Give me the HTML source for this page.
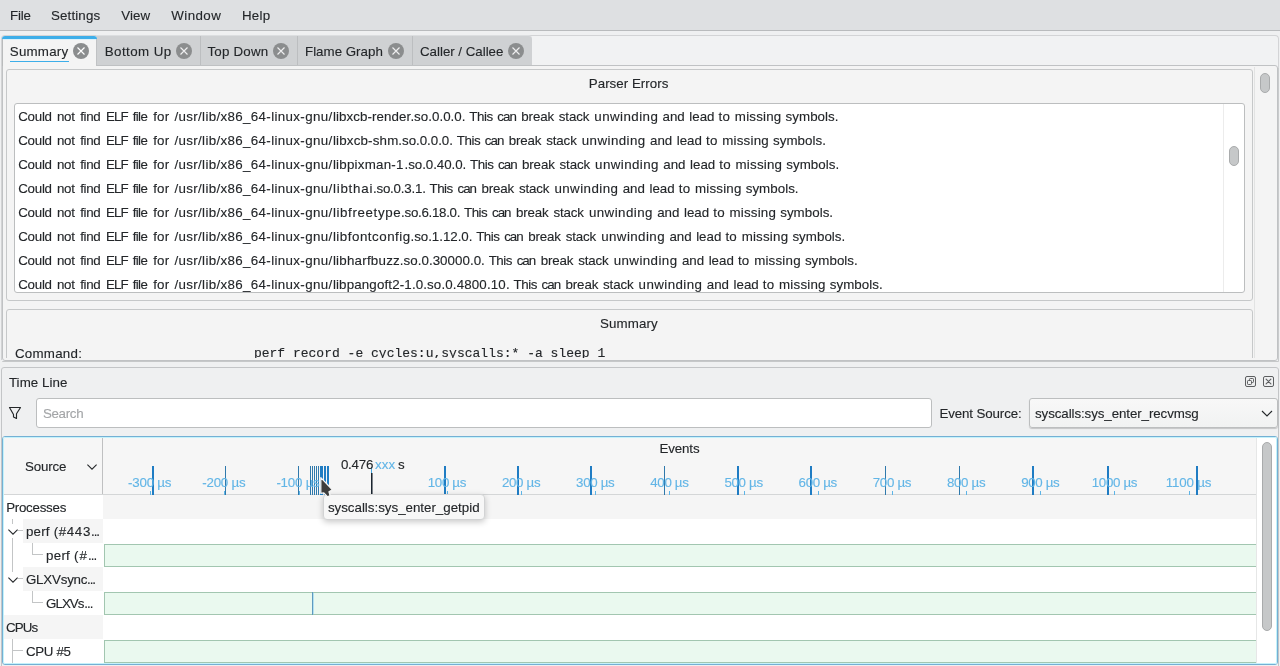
<!DOCTYPE html>
<html><head><meta charset="utf-8"><title>hotspot</title>
<style>
html,body{margin:0;padding:0}
body{width:1280px;height:666px;overflow:hidden;background:#eff0f1;position:relative;font-family:"Liberation Sans",sans-serif;font-size:13.33px;color:#232629}
div,span,svg{position:absolute;box-sizing:border-box}
.t{white-space:pre;line-height:18px;height:18px;-webkit-text-stroke:0.12px currentColor}
#menubar{left:0;top:0;width:1280px;height:30px;background:#dee0e2}
#menuline{left:0;top:30px;width:1280px;height:1px;background:#b9bbbd}
#tabs-inactive{left:96px;top:35px;width:436px;height:31px;background:#cfd1d3;border-top-right-radius:4px;border-bottom:1px solid #bfc1c3;border-top:1px solid #dcdee0}
.tsep{top:36px;width:1px;height:29px;background:#bcbec0}
#pane{left:2px;top:65px;width:1276px;height:296px;background:#f4f4f4;border:1px solid #c0c2c4;border-radius:0 3px 3px 3px}
#tab-active{left:2px;top:36px;width:95px;height:30px;background:#f4f4f4;border-radius:3px 3px 0 0;overflow:hidden}
#tab-active i{position:absolute;left:0;top:0;width:95px;height:3px;background:#3daee9}
#tab-active b{position:absolute;left:0;top:3px;width:1px;height:27px;background:#b9bbbc}
#tab-active u{position:absolute;left:94px;top:3px;width:1px;height:27px;background:#c0c2c4}
#tab-active s{position:absolute;left:1px;top:3px;width:93px;height:1px;background:#d9f1fb}
#tab-ul{left:10px;top:61px;width:59px;height:1px;background:#3daee9}
.cb{width:16px;height:16px;top:43px}
.gb{border:1px solid #c6c8c9;border-radius:3px;background:#f4f4f4}
.lb{background:#fff;border:1px solid #bcbebf;border-radius:3px}
.sbh{width:10px;border-radius:5px;background:#c6c8c9;border:1px solid #a9abac}
#paneshadow{left:2px;top:361px;width:1277px;height:1px;background:#c6c8c9;border-radius:0 0 3px 3px}
#paneshadow2{left:1278px;top:68px;width:1px;height:293px;background:#c9cbcc}
#dock{left:1px;top:367px;width:1278px;height:310px;border:1px solid #c3c5c7;border-radius:3px;background:#eff0f1}
#tree{left:2px;top:436px;width:1276px;height:229px;border:1px solid #74b0d4;border-radius:3px;background:#fff;overflow:hidden}
#treeglow{left:3px;top:437px;width:1274px;height:227px;border:1px solid #c4f2fb;border-radius:2px;z-index:5}
.row{left:0;height:24px}
.bar{left:101px;width:1152px;height:23px;background:#eaf9ef;border:1px solid #a2c6b0;border-right:0}
.br{background:#c3c5c6}
.ev{top:466px;height:29px;background:#1f7cc3}
.ev1{top:466px;height:29px;width:1px;background:#2f79ac}
.tick{top:491px;width:1px;height:4px;background:#5db4e6}
</style></head><body>
<div id="root" style="left:0;top:0;width:1280px;height:666px;will-change:transform">
<div id="menubar"></div><div id="menuline"></div>

<div style="left:1px;top:35px;width:1278px;height:34px;border:1px solid #d3d4d6;border-bottom:0;border-radius:4px 4px 0 0;background:#f1f2f3"></div>
<div id="pane"></div>
<div id="tabs-inactive"></div>
<div class="tsep" style="left:200px"></div><div class="tsep" style="left:297px"></div><div class="tsep" style="left:412px"></div>
<div id="tab-active"><i></i><b></b><u></u><s></s></div>
<div id="tab-ul"></div>
<svg class="cb" style="left:73px" viewBox="0 0 16 16"><circle cx="8" cy="8" r="8" fill="#8b8d8e"/><path d="M4.5 4.5l7 7M11.5 4.5l-7 7" stroke="#fff" stroke-width="1.15" fill="none"/></svg>
<svg class="cb" style="left:176px" viewBox="0 0 16 16"><circle cx="8" cy="8" r="8" fill="#8b8d8e"/><path d="M4.5 4.5l7 7M11.5 4.5l-7 7" stroke="#eeeeef" stroke-width="1.15" fill="none"/></svg>
<svg class="cb" style="left:273px" viewBox="0 0 16 16"><circle cx="8" cy="8" r="8" fill="#8b8d8e"/><path d="M4.5 4.5l7 7M11.5 4.5l-7 7" stroke="#eeeeef" stroke-width="1.15" fill="none"/></svg>
<svg class="cb" style="left:388px" viewBox="0 0 16 16"><circle cx="8" cy="8" r="8" fill="#8b8d8e"/><path d="M4.5 4.5l7 7M11.5 4.5l-7 7" stroke="#eeeeef" stroke-width="1.15" fill="none"/></svg>
<svg class="cb" style="left:508px" viewBox="0 0 16 16"><circle cx="8" cy="8" r="8" fill="#8b8d8e"/><path d="M4.5 4.5l7 7M11.5 4.5l-7 7" stroke="#eeeeef" stroke-width="1.15" fill="none"/></svg>

<!-- Parser errors group -->
<div class="gb" style="left:6px;top:69px;width:1247px;height:232px"></div>
<div class="lb" style="left:14px;top:103px;width:1231px;height:190px"></div>
<div style="left:1223px;top:104px;width:1px;height:188px;background:#ececec"></div>
<div class="sbh" style="left:1229px;top:146px;height:20px"></div>
<div style="left:0;top:0;width:1223px;height:292px;overflow:hidden"><span class="t" style="left:18.15px;top:108.38px;color:#232629;font-family:'Liberation Sans';font-size:13.33px;letter-spacing:-0.236px">Could</span>
<span class="t" style="left:56.90px;top:108.38px;color:#232629;font-family:'Liberation Sans';font-size:13.33px;letter-spacing:-0.210px">not</span>
<span class="t" style="left:80.15px;top:108.38px;color:#232629;font-family:'Liberation Sans';font-size:13.33px;letter-spacing:-0.338px">find</span>
<span class="t" style="left:105.90px;top:108.38px;color:#232629;font-family:'Liberation Sans';font-size:13.33px;letter-spacing:-0.851px">ELF</span>
<span class="t" style="left:132.65px;top:108.38px;color:#232629;font-family:'Liberation Sans';font-size:13.33px;letter-spacing:-0.599px">file</span>
<span class="t" style="left:153.15px;top:108.38px;color:#232629;font-family:'Liberation Sans';font-size:13.33px;letter-spacing:0.196px">for</span>
<span class="t" style="left:174.40px;top:108.38px;color:#232629;font-family:'Liberation Sans';font-size:13.33px;letter-spacing:0.353px">/usr/lib/x86_64-linux-gnu/</span>
<span class="t" style="left:332.90px;top:108.38px;color:#232629;font-family:'Liberation Sans';font-size:13.33px;letter-spacing:0.085px">libxcb-render</span>
<span class="t" style="left:410.40px;top:108.38px;color:#232629;font-family:'Liberation Sans';font-size:13.33px;letter-spacing:0.031px">.so.0.0.0.</span>
<span class="t" style="left:469.35px;top:108.38px;color:#232629;font-family:'Liberation Sans';font-size:13.33px;letter-spacing:-0.447px">This</span>
<span class="t" style="left:497.35px;top:108.38px;color:#232629;font-family:'Liberation Sans';font-size:13.33px;letter-spacing:-0.950px">can</span>
<span class="t" style="left:521.35px;top:108.38px;color:#232629;font-family:'Liberation Sans';font-size:13.33px;letter-spacing:-0.139px">break</span>
<span class="t" style="left:558.85px;top:108.38px;color:#232629;font-family:'Liberation Sans';font-size:13.33px;letter-spacing:-0.142px">stack</span>
<span class="t" style="left:594.35px;top:108.38px;color:#232629;font-family:'Liberation Sans';font-size:13.33px;letter-spacing:0.430px">unwinding</span>
<span class="t" style="left:662.60px;top:108.38px;color:#232629;font-family:'Liberation Sans';font-size:13.33px;letter-spacing:-0.033px">and</span>
<span class="t" style="left:689.35px;top:108.38px;color:#232629;font-family:'Liberation Sans';font-size:13.33px;letter-spacing:-0.013px">lead</span>
<span class="t" style="left:718.60px;top:108.38px;color:#232629;font-family:'Liberation Sans';font-size:13.33px;letter-spacing:0.263px">to</span>
<span class="t" style="left:734.85px;top:108.38px;color:#232629;font-family:'Liberation Sans';font-size:13.33px;letter-spacing:0.209px">missing</span>
<span class="t" style="left:785.60px;top:108.38px;color:#232629;font-family:'Liberation Sans';font-size:13.33px;letter-spacing:0.038px">symbols.</span>
<span class="t" style="left:18.15px;top:132.38px;color:#232629;font-family:'Liberation Sans';font-size:13.33px;letter-spacing:-0.236px">Could</span>
<span class="t" style="left:56.90px;top:132.38px;color:#232629;font-family:'Liberation Sans';font-size:13.33px;letter-spacing:-0.210px">not</span>
<span class="t" style="left:80.15px;top:132.38px;color:#232629;font-family:'Liberation Sans';font-size:13.33px;letter-spacing:-0.338px">find</span>
<span class="t" style="left:105.90px;top:132.38px;color:#232629;font-family:'Liberation Sans';font-size:13.33px;letter-spacing:-0.851px">ELF</span>
<span class="t" style="left:132.65px;top:132.38px;color:#232629;font-family:'Liberation Sans';font-size:13.33px;letter-spacing:-0.599px">file</span>
<span class="t" style="left:153.15px;top:132.38px;color:#232629;font-family:'Liberation Sans';font-size:13.33px;letter-spacing:0.196px">for</span>
<span class="t" style="left:174.40px;top:132.38px;color:#232629;font-family:'Liberation Sans';font-size:13.33px;letter-spacing:0.353px">/usr/lib/x86_64-linux-gnu/</span>
<span class="t" style="left:332.90px;top:132.38px;color:#232629;font-family:'Liberation Sans';font-size:13.33px;letter-spacing:0.190px">libxcb-shm</span>
<span class="t" style="left:398.30px;top:132.38px;color:#232629;font-family:'Liberation Sans';font-size:13.33px;letter-spacing:-0.019px">.so.0.0.0.</span>
<span class="t" style="left:456.75px;top:132.38px;color:#232629;font-family:'Liberation Sans';font-size:13.33px;letter-spacing:-0.447px">This</span>
<span class="t" style="left:484.75px;top:132.38px;color:#232629;font-family:'Liberation Sans';font-size:13.33px;letter-spacing:-0.950px">can</span>
<span class="t" style="left:508.75px;top:132.38px;color:#232629;font-family:'Liberation Sans';font-size:13.33px;letter-spacing:-0.139px">break</span>
<span class="t" style="left:546.25px;top:132.38px;color:#232629;font-family:'Liberation Sans';font-size:13.33px;letter-spacing:-0.142px">stack</span>
<span class="t" style="left:581.75px;top:132.38px;color:#232629;font-family:'Liberation Sans';font-size:13.33px;letter-spacing:0.430px">unwinding</span>
<span class="t" style="left:650.00px;top:132.38px;color:#232629;font-family:'Liberation Sans';font-size:13.33px;letter-spacing:-0.033px">and</span>
<span class="t" style="left:676.75px;top:132.38px;color:#232629;font-family:'Liberation Sans';font-size:13.33px;letter-spacing:-0.013px">lead</span>
<span class="t" style="left:706.00px;top:132.38px;color:#232629;font-family:'Liberation Sans';font-size:13.33px;letter-spacing:0.263px">to</span>
<span class="t" style="left:722.25px;top:132.38px;color:#232629;font-family:'Liberation Sans';font-size:13.33px;letter-spacing:0.209px">missing</span>
<span class="t" style="left:773.00px;top:132.38px;color:#232629;font-family:'Liberation Sans';font-size:13.33px;letter-spacing:0.038px">symbols.</span>
<span class="t" style="left:18.15px;top:156.38px;color:#232629;font-family:'Liberation Sans';font-size:13.33px;letter-spacing:-0.236px">Could</span>
<span class="t" style="left:56.90px;top:156.38px;color:#232629;font-family:'Liberation Sans';font-size:13.33px;letter-spacing:-0.210px">not</span>
<span class="t" style="left:80.15px;top:156.38px;color:#232629;font-family:'Liberation Sans';font-size:13.33px;letter-spacing:-0.338px">find</span>
<span class="t" style="left:105.90px;top:156.38px;color:#232629;font-family:'Liberation Sans';font-size:13.33px;letter-spacing:-0.851px">ELF</span>
<span class="t" style="left:132.65px;top:156.38px;color:#232629;font-family:'Liberation Sans';font-size:13.33px;letter-spacing:-0.599px">file</span>
<span class="t" style="left:153.15px;top:156.38px;color:#232629;font-family:'Liberation Sans';font-size:13.33px;letter-spacing:0.196px">for</span>
<span class="t" style="left:174.40px;top:156.38px;color:#232629;font-family:'Liberation Sans';font-size:13.33px;letter-spacing:0.353px">/usr/lib/x86_64-linux-gnu/</span>
<span class="t" style="left:332.90px;top:156.38px;color:#232629;font-family:'Liberation Sans';font-size:13.33px;letter-spacing:0.240px">libpixman-1</span>
<span class="t" style="left:404.50px;top:156.38px;color:#232629;font-family:'Liberation Sans';font-size:13.33px;letter-spacing:-0.045px">.so.0.40.0.</span>
<span class="t" style="left:470.05px;top:156.38px;color:#232629;font-family:'Liberation Sans';font-size:13.33px;letter-spacing:-0.447px">This</span>
<span class="t" style="left:498.05px;top:156.38px;color:#232629;font-family:'Liberation Sans';font-size:13.33px;letter-spacing:-0.950px">can</span>
<span class="t" style="left:522.05px;top:156.38px;color:#232629;font-family:'Liberation Sans';font-size:13.33px;letter-spacing:-0.139px">break</span>
<span class="t" style="left:559.55px;top:156.38px;color:#232629;font-family:'Liberation Sans';font-size:13.33px;letter-spacing:-0.142px">stack</span>
<span class="t" style="left:595.05px;top:156.38px;color:#232629;font-family:'Liberation Sans';font-size:13.33px;letter-spacing:0.430px">unwinding</span>
<span class="t" style="left:663.30px;top:156.38px;color:#232629;font-family:'Liberation Sans';font-size:13.33px;letter-spacing:-0.033px">and</span>
<span class="t" style="left:690.05px;top:156.38px;color:#232629;font-family:'Liberation Sans';font-size:13.33px;letter-spacing:-0.013px">lead</span>
<span class="t" style="left:719.30px;top:156.38px;color:#232629;font-family:'Liberation Sans';font-size:13.33px;letter-spacing:0.263px">to</span>
<span class="t" style="left:735.55px;top:156.38px;color:#232629;font-family:'Liberation Sans';font-size:13.33px;letter-spacing:0.209px">missing</span>
<span class="t" style="left:786.30px;top:156.38px;color:#232629;font-family:'Liberation Sans';font-size:13.33px;letter-spacing:0.038px">symbols.</span>
<span class="t" style="left:18.15px;top:180.38px;color:#232629;font-family:'Liberation Sans';font-size:13.33px;letter-spacing:-0.236px">Could</span>
<span class="t" style="left:56.90px;top:180.38px;color:#232629;font-family:'Liberation Sans';font-size:13.33px;letter-spacing:-0.210px">not</span>
<span class="t" style="left:80.15px;top:180.38px;color:#232629;font-family:'Liberation Sans';font-size:13.33px;letter-spacing:-0.338px">find</span>
<span class="t" style="left:105.90px;top:180.38px;color:#232629;font-family:'Liberation Sans';font-size:13.33px;letter-spacing:-0.851px">ELF</span>
<span class="t" style="left:132.65px;top:180.38px;color:#232629;font-family:'Liberation Sans';font-size:13.33px;letter-spacing:-0.599px">file</span>
<span class="t" style="left:153.15px;top:180.38px;color:#232629;font-family:'Liberation Sans';font-size:13.33px;letter-spacing:0.196px">for</span>
<span class="t" style="left:174.40px;top:180.38px;color:#232629;font-family:'Liberation Sans';font-size:13.33px;letter-spacing:0.353px">/usr/lib/x86_64-linux-gnu/</span>
<span class="t" style="left:332.90px;top:180.38px;color:#232629;font-family:'Liberation Sans';font-size:13.33px;letter-spacing:0.782px">libthai</span>
<span class="t" style="left:373.00px;top:180.38px;color:#232629;font-family:'Liberation Sans';font-size:13.33px;letter-spacing:-0.219px">.so.0.3.1.</span>
<span class="t" style="left:429.45px;top:180.38px;color:#232629;font-family:'Liberation Sans';font-size:13.33px;letter-spacing:-0.447px">This</span>
<span class="t" style="left:457.45px;top:180.38px;color:#232629;font-family:'Liberation Sans';font-size:13.33px;letter-spacing:-0.950px">can</span>
<span class="t" style="left:481.45px;top:180.38px;color:#232629;font-family:'Liberation Sans';font-size:13.33px;letter-spacing:-0.139px">break</span>
<span class="t" style="left:518.95px;top:180.38px;color:#232629;font-family:'Liberation Sans';font-size:13.33px;letter-spacing:-0.142px">stack</span>
<span class="t" style="left:554.45px;top:180.38px;color:#232629;font-family:'Liberation Sans';font-size:13.33px;letter-spacing:0.430px">unwinding</span>
<span class="t" style="left:622.70px;top:180.38px;color:#232629;font-family:'Liberation Sans';font-size:13.33px;letter-spacing:-0.033px">and</span>
<span class="t" style="left:649.45px;top:180.38px;color:#232629;font-family:'Liberation Sans';font-size:13.33px;letter-spacing:-0.013px">lead</span>
<span class="t" style="left:678.70px;top:180.38px;color:#232629;font-family:'Liberation Sans';font-size:13.33px;letter-spacing:0.263px">to</span>
<span class="t" style="left:694.95px;top:180.38px;color:#232629;font-family:'Liberation Sans';font-size:13.33px;letter-spacing:0.209px">missing</span>
<span class="t" style="left:745.70px;top:180.38px;color:#232629;font-family:'Liberation Sans';font-size:13.33px;letter-spacing:0.038px">symbols.</span>
<span class="t" style="left:18.15px;top:204.38px;color:#232629;font-family:'Liberation Sans';font-size:13.33px;letter-spacing:-0.236px">Could</span>
<span class="t" style="left:56.90px;top:204.38px;color:#232629;font-family:'Liberation Sans';font-size:13.33px;letter-spacing:-0.210px">not</span>
<span class="t" style="left:80.15px;top:204.38px;color:#232629;font-family:'Liberation Sans';font-size:13.33px;letter-spacing:-0.338px">find</span>
<span class="t" style="left:105.90px;top:204.38px;color:#232629;font-family:'Liberation Sans';font-size:13.33px;letter-spacing:-0.851px">ELF</span>
<span class="t" style="left:132.65px;top:204.38px;color:#232629;font-family:'Liberation Sans';font-size:13.33px;letter-spacing:-0.599px">file</span>
<span class="t" style="left:153.15px;top:204.38px;color:#232629;font-family:'Liberation Sans';font-size:13.33px;letter-spacing:0.196px">for</span>
<span class="t" style="left:174.40px;top:204.38px;color:#232629;font-family:'Liberation Sans';font-size:13.33px;letter-spacing:0.353px">/usr/lib/x86_64-linux-gnu/</span>
<span class="t" style="left:332.90px;top:204.38px;color:#232629;font-family:'Liberation Sans';font-size:13.33px;letter-spacing:0.627px">libfreetype</span>
<span class="t" style="left:401.10px;top:204.38px;color:#232629;font-family:'Liberation Sans';font-size:13.33px;letter-spacing:-0.291px">.so.6.18.0.</span>
<span class="t" style="left:463.95px;top:204.38px;color:#232629;font-family:'Liberation Sans';font-size:13.33px;letter-spacing:-0.447px">This</span>
<span class="t" style="left:491.95px;top:204.38px;color:#232629;font-family:'Liberation Sans';font-size:13.33px;letter-spacing:-0.950px">can</span>
<span class="t" style="left:515.95px;top:204.38px;color:#232629;font-family:'Liberation Sans';font-size:13.33px;letter-spacing:-0.139px">break</span>
<span class="t" style="left:553.45px;top:204.38px;color:#232629;font-family:'Liberation Sans';font-size:13.33px;letter-spacing:-0.142px">stack</span>
<span class="t" style="left:588.95px;top:204.38px;color:#232629;font-family:'Liberation Sans';font-size:13.33px;letter-spacing:0.430px">unwinding</span>
<span class="t" style="left:657.20px;top:204.38px;color:#232629;font-family:'Liberation Sans';font-size:13.33px;letter-spacing:-0.033px">and</span>
<span class="t" style="left:683.95px;top:204.38px;color:#232629;font-family:'Liberation Sans';font-size:13.33px;letter-spacing:-0.013px">lead</span>
<span class="t" style="left:713.20px;top:204.38px;color:#232629;font-family:'Liberation Sans';font-size:13.33px;letter-spacing:0.263px">to</span>
<span class="t" style="left:729.45px;top:204.38px;color:#232629;font-family:'Liberation Sans';font-size:13.33px;letter-spacing:0.209px">missing</span>
<span class="t" style="left:780.20px;top:204.38px;color:#232629;font-family:'Liberation Sans';font-size:13.33px;letter-spacing:0.038px">symbols.</span>
<span class="t" style="left:18.15px;top:228.38px;color:#232629;font-family:'Liberation Sans';font-size:13.33px;letter-spacing:-0.236px">Could</span>
<span class="t" style="left:56.90px;top:228.38px;color:#232629;font-family:'Liberation Sans';font-size:13.33px;letter-spacing:-0.210px">not</span>
<span class="t" style="left:80.15px;top:228.38px;color:#232629;font-family:'Liberation Sans';font-size:13.33px;letter-spacing:-0.338px">find</span>
<span class="t" style="left:105.90px;top:228.38px;color:#232629;font-family:'Liberation Sans';font-size:13.33px;letter-spacing:-0.851px">ELF</span>
<span class="t" style="left:132.65px;top:228.38px;color:#232629;font-family:'Liberation Sans';font-size:13.33px;letter-spacing:-0.599px">file</span>
<span class="t" style="left:153.15px;top:228.38px;color:#232629;font-family:'Liberation Sans';font-size:13.33px;letter-spacing:0.196px">for</span>
<span class="t" style="left:174.40px;top:228.38px;color:#232629;font-family:'Liberation Sans';font-size:13.33px;letter-spacing:0.353px">/usr/lib/x86_64-linux-gnu/</span>
<span class="t" style="left:332.90px;top:228.38px;color:#232629;font-family:'Liberation Sans';font-size:13.33px;letter-spacing:0.512px">libfontconfig</span>
<span class="t" style="left:410.50px;top:228.38px;color:#232629;font-family:'Liberation Sans';font-size:13.33px;letter-spacing:-0.036px">.so.1.12.0.</span>
<span class="t" style="left:476.15px;top:228.38px;color:#232629;font-family:'Liberation Sans';font-size:13.33px;letter-spacing:-0.447px">This</span>
<span class="t" style="left:504.15px;top:228.38px;color:#232629;font-family:'Liberation Sans';font-size:13.33px;letter-spacing:-0.950px">can</span>
<span class="t" style="left:528.15px;top:228.38px;color:#232629;font-family:'Liberation Sans';font-size:13.33px;letter-spacing:-0.139px">break</span>
<span class="t" style="left:565.65px;top:228.38px;color:#232629;font-family:'Liberation Sans';font-size:13.33px;letter-spacing:-0.142px">stack</span>
<span class="t" style="left:601.15px;top:228.38px;color:#232629;font-family:'Liberation Sans';font-size:13.33px;letter-spacing:0.430px">unwinding</span>
<span class="t" style="left:669.40px;top:228.38px;color:#232629;font-family:'Liberation Sans';font-size:13.33px;letter-spacing:-0.033px">and</span>
<span class="t" style="left:696.15px;top:228.38px;color:#232629;font-family:'Liberation Sans';font-size:13.33px;letter-spacing:-0.013px">lead</span>
<span class="t" style="left:725.40px;top:228.38px;color:#232629;font-family:'Liberation Sans';font-size:13.33px;letter-spacing:0.263px">to</span>
<span class="t" style="left:741.65px;top:228.38px;color:#232629;font-family:'Liberation Sans';font-size:13.33px;letter-spacing:0.209px">missing</span>
<span class="t" style="left:792.40px;top:228.38px;color:#232629;font-family:'Liberation Sans';font-size:13.33px;letter-spacing:0.038px">symbols.</span>
<span class="t" style="left:18.15px;top:252.38px;color:#232629;font-family:'Liberation Sans';font-size:13.33px;letter-spacing:-0.236px">Could</span>
<span class="t" style="left:56.90px;top:252.38px;color:#232629;font-family:'Liberation Sans';font-size:13.33px;letter-spacing:-0.210px">not</span>
<span class="t" style="left:80.15px;top:252.38px;color:#232629;font-family:'Liberation Sans';font-size:13.33px;letter-spacing:-0.338px">find</span>
<span class="t" style="left:105.90px;top:252.38px;color:#232629;font-family:'Liberation Sans';font-size:13.33px;letter-spacing:-0.851px">ELF</span>
<span class="t" style="left:132.65px;top:252.38px;color:#232629;font-family:'Liberation Sans';font-size:13.33px;letter-spacing:-0.599px">file</span>
<span class="t" style="left:153.15px;top:252.38px;color:#232629;font-family:'Liberation Sans';font-size:13.33px;letter-spacing:0.196px">for</span>
<span class="t" style="left:174.40px;top:252.38px;color:#232629;font-family:'Liberation Sans';font-size:13.33px;letter-spacing:0.353px">/usr/lib/x86_64-linux-gnu/</span>
<span class="t" style="left:332.90px;top:252.38px;color:#232629;font-family:'Liberation Sans';font-size:13.33px;letter-spacing:0.239px">libharfbuzz</span>
<span class="t" style="left:399.80px;top:252.38px;color:#232629;font-family:'Liberation Sans';font-size:13.33px;letter-spacing:0.040px">.so.0.30000.0.</span>
<span class="t" style="left:488.65px;top:252.38px;color:#232629;font-family:'Liberation Sans';font-size:13.33px;letter-spacing:-0.447px">This</span>
<span class="t" style="left:516.65px;top:252.38px;color:#232629;font-family:'Liberation Sans';font-size:13.33px;letter-spacing:-0.950px">can</span>
<span class="t" style="left:540.65px;top:252.38px;color:#232629;font-family:'Liberation Sans';font-size:13.33px;letter-spacing:-0.139px">break</span>
<span class="t" style="left:578.15px;top:252.38px;color:#232629;font-family:'Liberation Sans';font-size:13.33px;letter-spacing:-0.142px">stack</span>
<span class="t" style="left:613.65px;top:252.38px;color:#232629;font-family:'Liberation Sans';font-size:13.33px;letter-spacing:0.430px">unwinding</span>
<span class="t" style="left:681.90px;top:252.38px;color:#232629;font-family:'Liberation Sans';font-size:13.33px;letter-spacing:-0.033px">and</span>
<span class="t" style="left:708.65px;top:252.38px;color:#232629;font-family:'Liberation Sans';font-size:13.33px;letter-spacing:-0.013px">lead</span>
<span class="t" style="left:737.90px;top:252.38px;color:#232629;font-family:'Liberation Sans';font-size:13.33px;letter-spacing:0.263px">to</span>
<span class="t" style="left:754.15px;top:252.38px;color:#232629;font-family:'Liberation Sans';font-size:13.33px;letter-spacing:0.209px">missing</span>
<span class="t" style="left:804.90px;top:252.38px;color:#232629;font-family:'Liberation Sans';font-size:13.33px;letter-spacing:0.038px">symbols.</span>
<span class="t" style="left:18.15px;top:276.38px;color:#232629;font-family:'Liberation Sans';font-size:13.33px;letter-spacing:-0.236px">Could</span>
<span class="t" style="left:56.90px;top:276.38px;color:#232629;font-family:'Liberation Sans';font-size:13.33px;letter-spacing:-0.210px">not</span>
<span class="t" style="left:80.15px;top:276.38px;color:#232629;font-family:'Liberation Sans';font-size:13.33px;letter-spacing:-0.338px">find</span>
<span class="t" style="left:105.90px;top:276.38px;color:#232629;font-family:'Liberation Sans';font-size:13.33px;letter-spacing:-0.851px">ELF</span>
<span class="t" style="left:132.65px;top:276.38px;color:#232629;font-family:'Liberation Sans';font-size:13.33px;letter-spacing:-0.599px">file</span>
<span class="t" style="left:153.15px;top:276.38px;color:#232629;font-family:'Liberation Sans';font-size:13.33px;letter-spacing:0.196px">for</span>
<span class="t" style="left:174.40px;top:276.38px;color:#232629;font-family:'Liberation Sans';font-size:13.33px;letter-spacing:0.353px">/usr/lib/x86_64-linux-gnu/</span>
<span class="t" style="left:332.90px;top:276.38px;color:#232629;font-family:'Liberation Sans';font-size:13.33px;letter-spacing:0.148px">libpangoft2-1.0</span>
<span class="t" style="left:423.20px;top:276.38px;color:#232629;font-family:'Liberation Sans';font-size:13.33px;letter-spacing:0.148px">.so.0.4800.10.</span>
<span class="t" style="left:513.55px;top:276.38px;color:#232629;font-family:'Liberation Sans';font-size:13.33px;letter-spacing:-0.447px">This</span>
<span class="t" style="left:541.55px;top:276.38px;color:#232629;font-family:'Liberation Sans';font-size:13.33px;letter-spacing:-0.950px">can</span>
<span class="t" style="left:565.55px;top:276.38px;color:#232629;font-family:'Liberation Sans';font-size:13.33px;letter-spacing:-0.139px">break</span>
<span class="t" style="left:603.05px;top:276.38px;color:#232629;font-family:'Liberation Sans';font-size:13.33px;letter-spacing:-0.142px">stack</span>
<span class="t" style="left:638.55px;top:276.38px;color:#232629;font-family:'Liberation Sans';font-size:13.33px;letter-spacing:0.430px">unwinding</span>
<span class="t" style="left:706.80px;top:276.38px;color:#232629;font-family:'Liberation Sans';font-size:13.33px;letter-spacing:-0.033px">and</span>
<span class="t" style="left:733.55px;top:276.38px;color:#232629;font-family:'Liberation Sans';font-size:13.33px;letter-spacing:-0.013px">lead</span>
<span class="t" style="left:762.80px;top:276.38px;color:#232629;font-family:'Liberation Sans';font-size:13.33px;letter-spacing:0.263px">to</span>
<span class="t" style="left:779.05px;top:276.38px;color:#232629;font-family:'Liberation Sans';font-size:13.33px;letter-spacing:0.209px">missing</span>
<span class="t" style="left:829.80px;top:276.38px;color:#232629;font-family:'Liberation Sans';font-size:13.33px;letter-spacing:0.038px">symbols.</span></div>
<!-- outer scrollbar -->
<div style="left:1254px;top:67px;width:1px;height:291px;background:#e2e3e3"></div>
<div class="sbh" style="left:1260px;top:73px;height:20px"></div>
<!-- Summary group -->
<div style="left:0;top:0;width:1280px;height:358px;overflow:hidden">
<div class="gb" style="left:6px;top:309px;width:1247px;height:120px"></div>
<span class="t" style="left:14.90px;top:345.38px;color:#232629;font-family:'Liberation Sans';font-size:13.33px;letter-spacing:0.252px">Command:</span>
<span class="t" style="left:253.90px;top:344.50px;color:#232629;font-family:'Liberation Mono';font-size:13.0px;letter-spacing:0.007px">perf record -e cycles:u,syscalls:* -a sleep 1</span>
</div>
<div style="left:1px;top:68px;width:1px;height:292px;background:#d2d3d4"></div><div id="paneshadow"></div><div id="paneshadow2"></div>

<!-- Dock -->
<div id="dock"></div>
<svg style="left:1244px;top:375px;width:13px;height:13px" viewBox="0 0 13 13"><rect x="1.5" y="1.5" width="10" height="10" rx="1.5" fill="none" stroke="#5c5e60" stroke-width="1"/><rect x="5.5" y="3.5" width="4" height="4" rx="0.8" fill="none" stroke="#5c5e60"/><rect x="3.5" y="5.5" width="4" height="4" rx="0.8" fill="#eff0f1" stroke="#5c5e60"/></svg>
<svg style="left:1262px;top:375px;width:13px;height:13px" viewBox="0 0 13 13"><rect x="1.5" y="1.5" width="10" height="10" rx="1.5" fill="none" stroke="#5c5e60" stroke-width="1"/><path d="M4.1 4.1l4.8 4.8M8.9 4.1l-4.8 4.8" stroke="#5c5e60" stroke-width="1.1" stroke-linecap="round" fill="none"/></svg>
<!-- filter icon -->
<svg style="left:8px;top:406px;width:14px;height:14px" viewBox="0 0 14 14"><path d="M1.5 1.5H12.5L8.5 7.7V12.5L5.5 11V8.5Z" fill="none" stroke="#232629" stroke-width="1.15" stroke-linejoin="round"/></svg>
<div class="lb" style="left:36px;top:398px;width:896px;height:30px"></div>
<div class="lb" style="left:1029px;top:398px;width:249px;height:30px;background:linear-gradient(#f8f8f8,#f1f2f2);box-shadow:0 1px 1px rgba(0,0,0,.18)"></div>
<svg style="left:1261px;top:409px;width:12px;height:9px" viewBox="0 0 12 9"><path d="M1 2l5 5 5-5" fill="none" stroke="#232629" stroke-width="1.1"/></svg>

<!-- Tree -->
<div id="tree">
 <div style="left:0;top:0;width:1253px;height:57px;background:#f6f6f6"></div>
 <div style="left:0;top:57px;width:1253px;height:1px;background:#d4d6d7"></div>
 <div style="left:99px;top:0;width:1px;height:57px;background:#bfc0c1"></div>
 <!-- rows -->
 <div class="row" style="top:58px;left:100px;width:1153px;background:#f5f5f5"></div>
 <div class="row" style="top:82px;left:20px;width:80px;background:#f5f5f5"></div>
 <div class="row" style="top:130px;left:20px;width:80px;background:#f5f5f5"></div>
 <div class="row" style="top:178px;left:0;width:100px;background:#f5f5f5"></div>
 <div class="bar" style="top:107px"></div>
 <div class="bar" style="top:155px"></div>
 <div class="bar" style="top:203px"></div>
 <div style="left:309px;top:155px;width:1px;height:23px;background:#5f9abf"></div><div style="left:310px;top:156px;width:1px;height:21px;background:#b4e1f1"></div>
 <!-- scrollbar -->
 <div style="left:1253px;top:0;width:21px;height:227px;background:#fff;border-left:1px solid #e6e7e7"></div>
 <div class="sbh" style="left:1259px;top:5px;height:189px"></div>
</div>
<div id="treeglow"></div>
<!-- branches -->
<div class="br" style="left:12px;top:519px;width:1px;height:5px"></div>
<div class="br" style="left:12px;top:538px;width:1px;height:34px"></div>
<div class="br" style="left:18px;top:530px;width:5px;height:1px"></div>
<div class="br" style="left:18px;top:578px;width:5px;height:1px"></div>
<div class="br" style="left:32px;top:543px;width:1px;height:11px"></div>
<div class="br" style="left:32px;top:554px;width:11px;height:1px"></div>
<div class="br" style="left:32px;top:591px;width:1px;height:11px"></div>
<div class="br" style="left:32px;top:602px;width:11px;height:1px"></div>
<div class="br" style="left:12px;top:639px;width:1px;height:25px"></div>
<div class="br" style="left:12px;top:650px;width:11px;height:1px"></div>
<svg style="left:7px;top:528px;width:12px;height:8px" viewBox="0 0 12 8"><path d="M1.4 1.6l4.6 4.6 4.6-4.6" fill="none" stroke="#232629" stroke-width="1.05"/></svg>
<svg style="left:7px;top:576px;width:12px;height:8px" viewBox="0 0 12 8"><path d="M1.4 1.6l4.6 4.6 4.6-4.6" fill="none" stroke="#232629" stroke-width="1.05"/></svg>
<svg style="left:86px;top:463px;width:12px;height:8px" viewBox="0 0 12 8"><path d="M1.4 1.6l4.6 4.6 4.6-4.6" fill="none" stroke="#232629" stroke-width="1.05"/></svg>

<!-- axis -->
<div class="tick" style="left:150px"></div><div class="tick" style="left:224px"></div><div class="tick" style="left:299px"></div><div class="tick" style="left:447px"></div><div class="tick" style="left:521px"></div><div class="tick" style="left:595px"></div><div class="tick" style="left:669px"></div><div class="tick" style="left:744px"></div><div class="tick" style="left:818px"></div><div class="tick" style="left:892px"></div><div class="tick" style="left:966px"></div><div class="tick" style="left:1040px"></div><div class="tick" style="left:1114px"></div><div class="tick" style="left:1189px"></div>
<div class="ev" style="left:152px;width:2px"></div>
<div class="ev1" style="left:225px"></div>
<div class="ev1" style="left:298px"></div>
<div class="ev1" style="left:310px"></div><div class="ev1" style="left:312px"></div><div class="ev1" style="left:314px"></div><div class="ev1" style="left:316px"></div><div class="ev1" style="left:318px"></div>
<div class="ev" style="left:320px;width:3px"></div><div class="ev" style="left:324px;width:2px"></div><div class="ev" style="left:327px;width:2px"></div>
<div class="ev" style="left:444px;width:2px"></div><div class="ev" style="left:517px;width:2px"></div><div class="ev" style="left:590px;width:2px"></div>
<div class="ev1" style="left:664px"></div><div class="ev" style="left:737px;width:2px"></div><div class="ev" style="left:810px;width:2px"></div>
<div class="ev1" style="left:885px"></div><div class="ev1" style="left:959px"></div>
<div class="ev" style="left:1032px;width:2px"></div><div class="ev" style="left:1107px;width:2px"></div><div class="ev" style="left:1196px;width:2px"></div>
<!-- current time marker -->
<div style="left:371px;top:467px;width:1px;height:6px;background:#4aa6dc"></div>
<div style="left:371px;top:473px;width:1px;height:22px;background:#1b2530"></div><div style="left:372px;top:473px;width:1px;height:22px;background:rgba(27,37,48,.55)"></div>

<!-- tooltip -->
<div style="left:323px;top:494px;width:162px;height:26px;background:#f7f7f7;border:1px solid #d2d3d4;border-radius:4px;box-shadow:0 2px 6px rgba(0,0,0,.22);z-index:20"></div>
<!-- cursor -->
<svg style="left:318px;top:474px;width:18px;height:26px;z-index:40" viewBox="0 0 18 26"><path d="M2.8 3.6L2.8 19.3L5.8 18.9L9.7 22.9L12.1 21.5L11 17.8L14.4 15.7Z" fill="#3d3d3d" stroke="#f6f6f6" stroke-width="1.3" stroke-linejoin="round"/></svg>

<span class="t" style="left:10.00px;top:7.38px;color:#232629;font-family:'Liberation Sans';font-size:13.33px;letter-spacing:-0.196px">File</span>
<span class="t" style="left:51.00px;top:7.38px;color:#232629;font-family:'Liberation Sans';font-size:13.33px;letter-spacing:0.141px">Settings</span>
<span class="t" style="left:121.30px;top:7.38px;color:#232629;font-family:'Liberation Sans';font-size:13.33px;letter-spacing:0.086px">View</span>
<span class="t" style="left:171.30px;top:7.38px;color:#232629;font-family:'Liberation Sans';font-size:13.33px;letter-spacing:0.416px">Window</span>
<span class="t" style="left:241.90px;top:7.38px;color:#232629;font-family:'Liberation Sans';font-size:13.33px;letter-spacing:0.320px">Help</span>
<span class="t" style="left:9.80px;top:43.38px;color:#232629;font-family:'Liberation Sans';font-size:13.33px;letter-spacing:0.224px">Summary</span>
<span class="t" style="left:104.80px;top:43.38px;color:#232629;font-family:'Liberation Sans';font-size:13.33px;letter-spacing:0.426px">Bottom Up</span>
<span class="t" style="left:207.50px;top:43.38px;color:#232629;font-family:'Liberation Sans';font-size:13.33px;letter-spacing:0.202px">Top Down</span>
<span class="t" style="left:305.00px;top:43.38px;color:#232629;font-family:'Liberation Sans';font-size:13.33px;letter-spacing:0.002px">Flame Graph</span>
<span class="t" style="left:420.00px;top:43.38px;color:#232629;font-family:'Liberation Sans';font-size:13.33px;letter-spacing:-0.021px">Caller / Callee</span>
<span class="t" style="left:588.80px;top:75.38px;color:#232629;font-family:'Liberation Sans';font-size:13.33px;letter-spacing:0.027px">Parser Errors</span>
<span class="t" style="left:599.90px;top:315.38px;color:#232629;font-family:'Liberation Sans';font-size:13.33px;letter-spacing:0.124px">Summary</span>
<span class="t" style="left:8.90px;top:374.38px;color:#232629;font-family:'Liberation Sans';font-size:13.33px;letter-spacing:0.074px">Time Line</span>
<span class="t" style="left:42.90px;top:405.38px;color:#a3a5a7;font-family:'Liberation Sans';font-size:13.33px;letter-spacing:-0.306px">Search</span>
<span class="t" style="left:939.40px;top:405.38px;color:#232629;font-family:'Liberation Sans';font-size:13.33px;letter-spacing:-0.117px">Event Source:</span>
<span class="t" style="left:1035.00px;top:405.38px;color:#232629;font-family:'Liberation Sans';font-size:13.33px;letter-spacing:-0.085px">syscalls:sys_enter_recvmsg</span>
<span class="t" style="left:659.40px;top:440.38px;color:#232629;font-family:'Liberation Sans';font-size:13.33px;letter-spacing:-0.100px">Events</span>
<span class="t" style="left:24.90px;top:458.38px;color:#232629;font-family:'Liberation Sans';font-size:13.33px;letter-spacing:-0.139px">Source</span>
<span class="t" style="left:128.07px;top:474.38px;color:#62b5e6;font-family:'Liberation Sans';font-size:13.33px;letter-spacing:-0.226px">-300 µs</span>
<span class="t" style="left:202.24px;top:474.38px;color:#62b5e6;font-family:'Liberation Sans';font-size:13.33px;letter-spacing:-0.226px">-200 µs</span>
<span class="t" style="left:276.40px;top:474.38px;color:#62b5e6;font-family:'Liberation Sans';font-size:13.33px;letter-spacing:-0.226px">-100 µs</span>
<span class="t" style="left:427.77px;top:474.38px;color:#62b5e6;font-family:'Liberation Sans';font-size:13.33px;letter-spacing:-0.333px">100 µs</span>
<span class="t" style="left:501.94px;top:474.38px;color:#62b5e6;font-family:'Liberation Sans';font-size:13.33px;letter-spacing:-0.333px">200 µs</span>
<span class="t" style="left:576.11px;top:474.38px;color:#62b5e6;font-family:'Liberation Sans';font-size:13.33px;letter-spacing:-0.333px">300 µs</span>
<span class="t" style="left:650.28px;top:474.38px;color:#62b5e6;font-family:'Liberation Sans';font-size:13.33px;letter-spacing:-0.333px">400 µs</span>
<span class="t" style="left:724.45px;top:474.38px;color:#62b5e6;font-family:'Liberation Sans';font-size:13.33px;letter-spacing:-0.333px">500 µs</span>
<span class="t" style="left:798.62px;top:474.38px;color:#62b5e6;font-family:'Liberation Sans';font-size:13.33px;letter-spacing:-0.333px">600 µs</span>
<span class="t" style="left:872.79px;top:474.38px;color:#62b5e6;font-family:'Liberation Sans';font-size:13.33px;letter-spacing:-0.333px">700 µs</span>
<span class="t" style="left:946.96px;top:474.38px;color:#62b5e6;font-family:'Liberation Sans';font-size:13.33px;letter-spacing:-0.333px">800 µs</span>
<span class="t" style="left:1021.13px;top:474.38px;color:#62b5e6;font-family:'Liberation Sans';font-size:13.33px;letter-spacing:-0.333px">900 µs</span>
<span class="t" style="left:1091.70px;top:474.38px;color:#62b5e6;font-family:'Liberation Sans';font-size:13.33px;letter-spacing:-0.315px">1000 µs</span>
<span class="t" style="left:1165.87px;top:474.38px;color:#62b5e6;font-family:'Liberation Sans';font-size:13.33px;letter-spacing:-0.174px">1100 µs</span>
<span class="t" style="left:340.90px;top:456.38px;color:#232629;font-family:'Liberation Sans';font-size:13.33px;letter-spacing:-0.192px">0.476</span>
<span class="t" style="left:375.00px;top:456.38px;color:#62b5e6;font-family:'Liberation Sans';font-size:13.33px;letter-spacing:0.100px">xxx</span>
<span class="t" style="left:397.90px;top:456.38px;color:#232629;font-family:'Liberation Sans';font-size:13.33px;letter-spacing:-0.272px">s</span>
<span class="t" style="left:327.90px;top:499.38px;color:#232629;font-family:'Liberation Sans';font-size:13.33px;letter-spacing:-0.009px;z-index:30">syscalls:sys_enter_getpid</span>
<span class="t" style="left:6.15px;top:499.38px;color:#232629;font-family:'Liberation Sans';font-size:13.33px;letter-spacing:-0.254px">Processes</span>
<span class="t" style="left:25.90px;top:523.38px;color:#232629;font-family:'Liberation Sans';font-size:13.33px;letter-spacing:0.233px">perf</span>
<span class="t" style="left:53.70px;top:523.38px;color:#232629;font-family:'Liberation Sans';font-size:13.33px;letter-spacing:0.641px">(#443</span>
<span class="t" style="left:90.95px;top:523.38px;color:#232629;font-family:'Liberation Sans';font-size:13.33px;letter-spacing:-1.003px">...</span>
<span class="t" style="left:46.10px;top:547.38px;color:#232629;font-family:'Liberation Sans';font-size:13.33px;letter-spacing:0.233px">perf</span>
<span class="t" style="left:73.90px;top:547.38px;color:#232629;font-family:'Liberation Sans';font-size:13.33px;letter-spacing:1.120px">(#</span>
<span class="t" style="left:88.05px;top:547.38px;color:#232629;font-family:'Liberation Sans';font-size:13.33px;letter-spacing:-1.003px">...</span>
<span class="t" style="left:25.90px;top:571.38px;color:#232629;font-family:'Liberation Sans';font-size:13.33px;letter-spacing:-0.196px">GLXVsync</span>
<span class="t" style="left:86.95px;top:571.38px;color:#232629;font-family:'Liberation Sans';font-size:13.33px;letter-spacing:-1.003px">...</span>
<span class="t" style="left:46.10px;top:595.38px;color:#232629;font-family:'Liberation Sans';font-size:13.33px;letter-spacing:-0.987px">GLXVs</span>
<span class="t" style="left:84.15px;top:595.38px;color:#232629;font-family:'Liberation Sans';font-size:13.33px;letter-spacing:-0.903px">...</span>
<span class="t" style="left:5.90px;top:619.38px;color:#232629;font-family:'Liberation Sans';font-size:13.33px;letter-spacing:-0.803px">CPUs</span>
<span class="t" style="left:26.10px;top:643.38px;color:#232629;font-family:'Liberation Sans';font-size:13.33px;letter-spacing:-0.379px">CPU #5</span>
</div>
</body></html>
